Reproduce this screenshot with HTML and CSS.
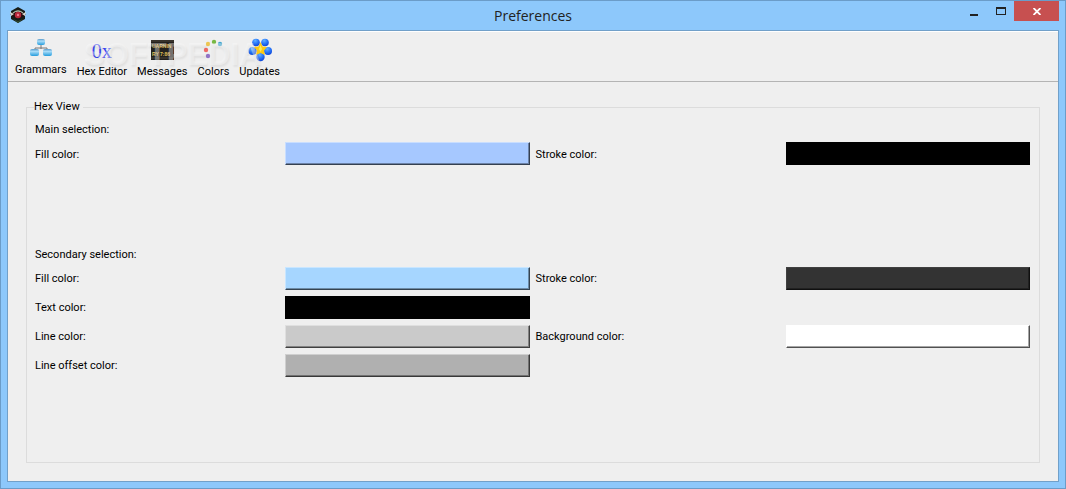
FILE: index.html
```html
<!DOCTYPE html>
<html lang="en">
<head>
    <meta charset="utf-8">
    <title>Preferences</title>
    <link rel="stylesheet" href="styles.css">
</head>
<body>
    <div class="window">
        <header class="titlebar">
            <svg class="app-icon" width="16" height="16" viewBox="0 0 16 16">
                <path d="M8 0L15 4V12L8 16L1 12V4Z" fill="#171c17"/>
                <path d="M2 6Q8 0 14 6L15 8Q8 3 1 8Z" fill="#52624c"/>
                <path d="M0 7Q8 2 16 7Q8 15 0 7Z" fill="#2a0d10"/>
                <path d="M0 5L4 7L1 9ZM16 5L12 7L15 9Z" fill="#d8dcd4"/>
                <path d="M3 6Q8 2 13 6" fill="none" stroke="#c4ccbe" stroke-width="1"/>
                <circle cx="8" cy="8" r="3.200" fill="#b5283a"/>
                <circle cx="8" cy="8" r="1.200" fill="#f0788a"/>
                <path d="M3 12L8 14L13 12L8 16Z" fill="#2f4a2f"/>
            </svg>
            <h1>Preferences</h1>
            <div class="controls">
                <button type="button" class="minimize" aria-label="Minimize">
                    <svg width="8" height="9"><path d="M0 7H8V9H0Z" fill="#222"/></svg>
                </button>
                <button type="button" class="maximize" aria-label="Maximize">
                    <svg width="10" height="8"><path d="M0 0H10V8H0ZM1 2V7H9V2Z" fill="#222" fill-rule="evenodd"/></svg>
                </button>
                <button type="button" class="close" aria-label="Close">
                    <svg width="8" height="7" viewBox="0 0 8 7"><path d="M0.5 0L7.5 7M7.5 0L0.5 7" stroke="#fff" stroke-width="1.8"/></svg>
                </button>
            </div>
        </header>

        <main class="content">
            <nav class="toolbar">
                <button type="button" class="tool">
                    <svg width="22" height="22" viewBox="0 0 22 22">
                        <defs>
                            <linearGradient id="node" x2="0" y2="1">
                                <stop offset="0" stop-color="#5a9ccc"/>
                                <stop offset=".35" stop-color="#a9dcf8"/>
                                <stop offset="1" stop-color="#259ddd"/>
                            </linearGradient>
                        </defs>
                        <path d="M11 7V11M5 13V10H17V13" fill="none" stroke="#777" stroke-width="1"/>
                        <rect x="7" y="1" width="8" height="6" rx="2" fill="url(#node)"/>
                        <rect x="0" y="11" width="9" height="7" rx="2" fill="url(#node)"/>
                        <rect x="13" y="11" width="9" height="7" rx="2" fill="url(#node)"/>
                    </svg>
                    <span>Grammars</span>
                </button>
                <button type="button" class="tool">
                    <span class="hex-icon">0x</span>
                    <span>Hex Editor</span>
                </button>
                <button type="button" class="tool">
                    <svg width="24" height="24" viewBox="0 0 24 24">
                        <rect x="1" y="2" width="23" height="20" fill="#24211d"/>
                        <path d="M1 3H24M1 20H24" stroke="#4a453b" stroke-width="1"/>
                        <text x="2" y="10" class="sign">UARNIN</text>
                        <text x="2" y="18" class="sign">RY 7:86</text>
                    </svg>
                    <span>Messages</span>
                </button>
                <button type="button" class="tool">
                    <svg width="24" height="24" viewBox="0 0 24 24">
                        <circle cx="7" cy="6" r="2.2" fill="#ecc653"/>
                        <circle cx="13" cy="4" r="2.2" fill="#78b843"/>
                        <circle cx="19" cy="6" r="2.2" fill="#41a5cf"/>
                        <circle cx="5" cy="12" r="2.2" fill="#ef6a66"/>
                        <circle cx="7" cy="18" r="2.2" fill="#9274c6"/>
                    </svg>
                    <span>Colors</span>
                </button>
                <button type="button" class="tool">
                    <svg width="24" height="24" viewBox="0 0 24 24">
                        <defs>
                            <radialGradient id="ball" cx=".4" cy=".25" r=".8">
                                <stop offset="0" stop-color="#62b0ff"/>
                                <stop offset=".5" stop-color="#2877fa"/>
                                <stop offset="1" stop-color="#0b42d5"/>
                            </radialGradient>
                        </defs>
                        <circle cx="8" cy="4.500" r="3.800" fill="url(#ball)"/>
                        <circle cx="17" cy="4.500" r="3.800" fill="url(#ball)"/>
                        <circle cx="4.500" cy="13" r="4" fill="url(#ball)"/>
                        <circle cx="20" cy="13" r="4" fill="url(#ball)"/>
                        <circle cx="12.500" cy="19" r="4.200" fill="url(#ball)"/>
                        <path d="M12.500 4L14.500 8.500L19 9L16 12.500L17 17L12.500 15L8 17L9 12.500L6 9L10.500 8.500Z" fill="#fcc915"/>
                        <path d="M12.500 7L14 11L12.500 14L11 11Z" fill="#ffed55"/>
                    </svg>
                    <span>Updates</span>
                </button>
                <span class="watermark" aria-hidden="true">SOFTPEDIA</span>
            </nav>

            <form class="page">
                <fieldset>
                    <legend>Hex View</legend>
                    <section class="group">
                        <h2>Main selection:</h2>
                        <label for="main-fill">Fill color:</label>
                        <button type="button" id="main-fill" class="swatch light-blue"></button>
                        <label for="main-stroke">Stroke color:</label>
                        <button type="button" id="main-stroke" class="swatch black"></button>
                    </section>
                    <section class="group">
                        <h2>Secondary selection:</h2>
                        <label for="second-fill">Fill color:</label>
                        <button type="button" id="second-fill" class="swatch sky"></button>
                        <label for="second-stroke">Stroke color:</label>
                        <button type="button" id="second-stroke" class="swatch charcoal"></button>

                        <label for="text-color" class="first">Text color:</label>
                        <button type="button" id="text-color" class="swatch black"></button>

                        <label for="line-color" class="first">Line color:</label>
                        <button type="button" id="line-color" class="swatch silver"></button>
                        <label for="background-color">Background color:</label>
                        <button type="button" id="background-color" class="swatch white"></button>

                        <label for="offset-color" class="first">Line offset color:</label>
                        <button type="button" id="offset-color" class="swatch gray"></button>
                    </section>
                </fieldset>
            </form>
        </main>
    </div>
</body>
</html>
```
FILE: styles.css
```css
* {
    margin: 0;
    padding: 0;
    box-sizing: border-box;
}

body {
    font-family: Roboto, "DejaVu Sans", sans-serif;
    font-size: 11px;
    line-height: 14px;
    color: #000;
}

button {
    border: none;
    background: none;
    font: inherit;
    color: inherit;
}

svg {
    display: block;
}

.window {
    display: flex;
    flex-direction: column;
    min-height: 100vh;
    padding: 0 6px 6px;
    background-color: #8dc8fb;
    border: 1px solid #6b9cc8;
}

/* title bar */
.titlebar {
    display: grid;
    grid-template-columns: 1fr auto 1fr;
    height: 29px;
}

.app-icon {
    margin: 6px 3px;
}

.titlebar h1 {
    font-family: "Open Sans", "Noto Sans", sans-serif;
    font-size: 14px;
    font-weight: normal;
    line-height: 29px;
    color: #222;
}

.controls {
    display: flex;
    justify-content: flex-end;
    height: 20px;
}

.controls button {
    display: flex;
    align-items: center;
    justify-content: center;
    width: 27px;
}

.controls .close {
    width: 45px;
    background-color: #c75050;
}

.content {
    flex: 1;
    display: flex;
    flex-direction: column;
    background-color: #efefef;
    border: 1px solid #71a0c9;
}

/* toolbar */
.toolbar {
    position: relative;
    display: flex;
    align-items: flex-start;
    height: 51px;
    padding: 6px 2px 0;
    border-top: 1px solid #fff;
    border-bottom: 1px solid #b4b4b4;
}

.tool {
    display: flex;
    flex-direction: column;
    align-items: center;
    gap: 3px;
    padding: 0 5px;
}

.hex-icon {
    height: 24px;
    font-family: "Liberation Serif", serif;
    font-size: 20px;
    line-height: 26px;
    color: #3c46f0;
}

.sign {
    font-family: "Liberation Sans", Arial, sans-serif;
    font-size: 5px;
    font-weight: bold;
    fill: #e0c05a;
}

.watermark {
    position: absolute;
    top: 5px;
    left: 76px;
    font-family: "Liberation Sans", Arial, sans-serif;
    font-size: 31px;
    font-weight: bold;
    line-height: 36px;
    color: rgba(250, 250, 250, 0.4);
    text-shadow: 1px 2px 2px rgba(0, 0, 0, 0.06);
    pointer-events: none;
}

/* preferences */
.page {
    flex: 1;
    display: flex;
    padding: 18px;
}

fieldset {
    flex: 1;
    display: flex;
    flex-direction: column;
    min-width: 0;
    padding: 9px 9px 3px 8px;
    border: 1px solid #dcdcdc;
}

legend {
    padding-right: 3px;
    margin-left: -1px;
}

.group {
    flex: 1 0 auto;
    display: grid;
    grid-template-columns: repeat(4, 1fr);
    grid-auto-rows: min-content;
    align-items: center;
    gap: 6px;
}

.group h2 {
    grid-column: 1 / -1;
    font-size: 11px;
    font-weight: normal;
    line-height: 13px;
}

.group label {
    padding-top: 2px;
}

.first {
    grid-column: 1;
}

.swatch {
    width: 100%;
    height: 23px;
    border: 1px solid;
    border-color: rgba(255, 255, 255, 0.4) rgba(0, 0, 0, 0.68) rgba(0, 0, 0, 0.68) rgba(255, 255, 255, 0.4);
    box-shadow: inset -1px -1px rgba(0, 0, 0, 0.35);
}

.light-blue {
    background-color: #a6c8ff;
}

.sky {
    background-color: #a6d6ff;
}

.silver {
    background-color: #cacaca;
}

.gray {
    background-color: #b0b0b0;
}

.white {
    background-color: #fff;
}

.charcoal {
    background-color: #333;
    border-top-color: #404040;
    border-left-color: #404040;
}

.black {
    background-color: #000;
    border-color: #000;
}
```
